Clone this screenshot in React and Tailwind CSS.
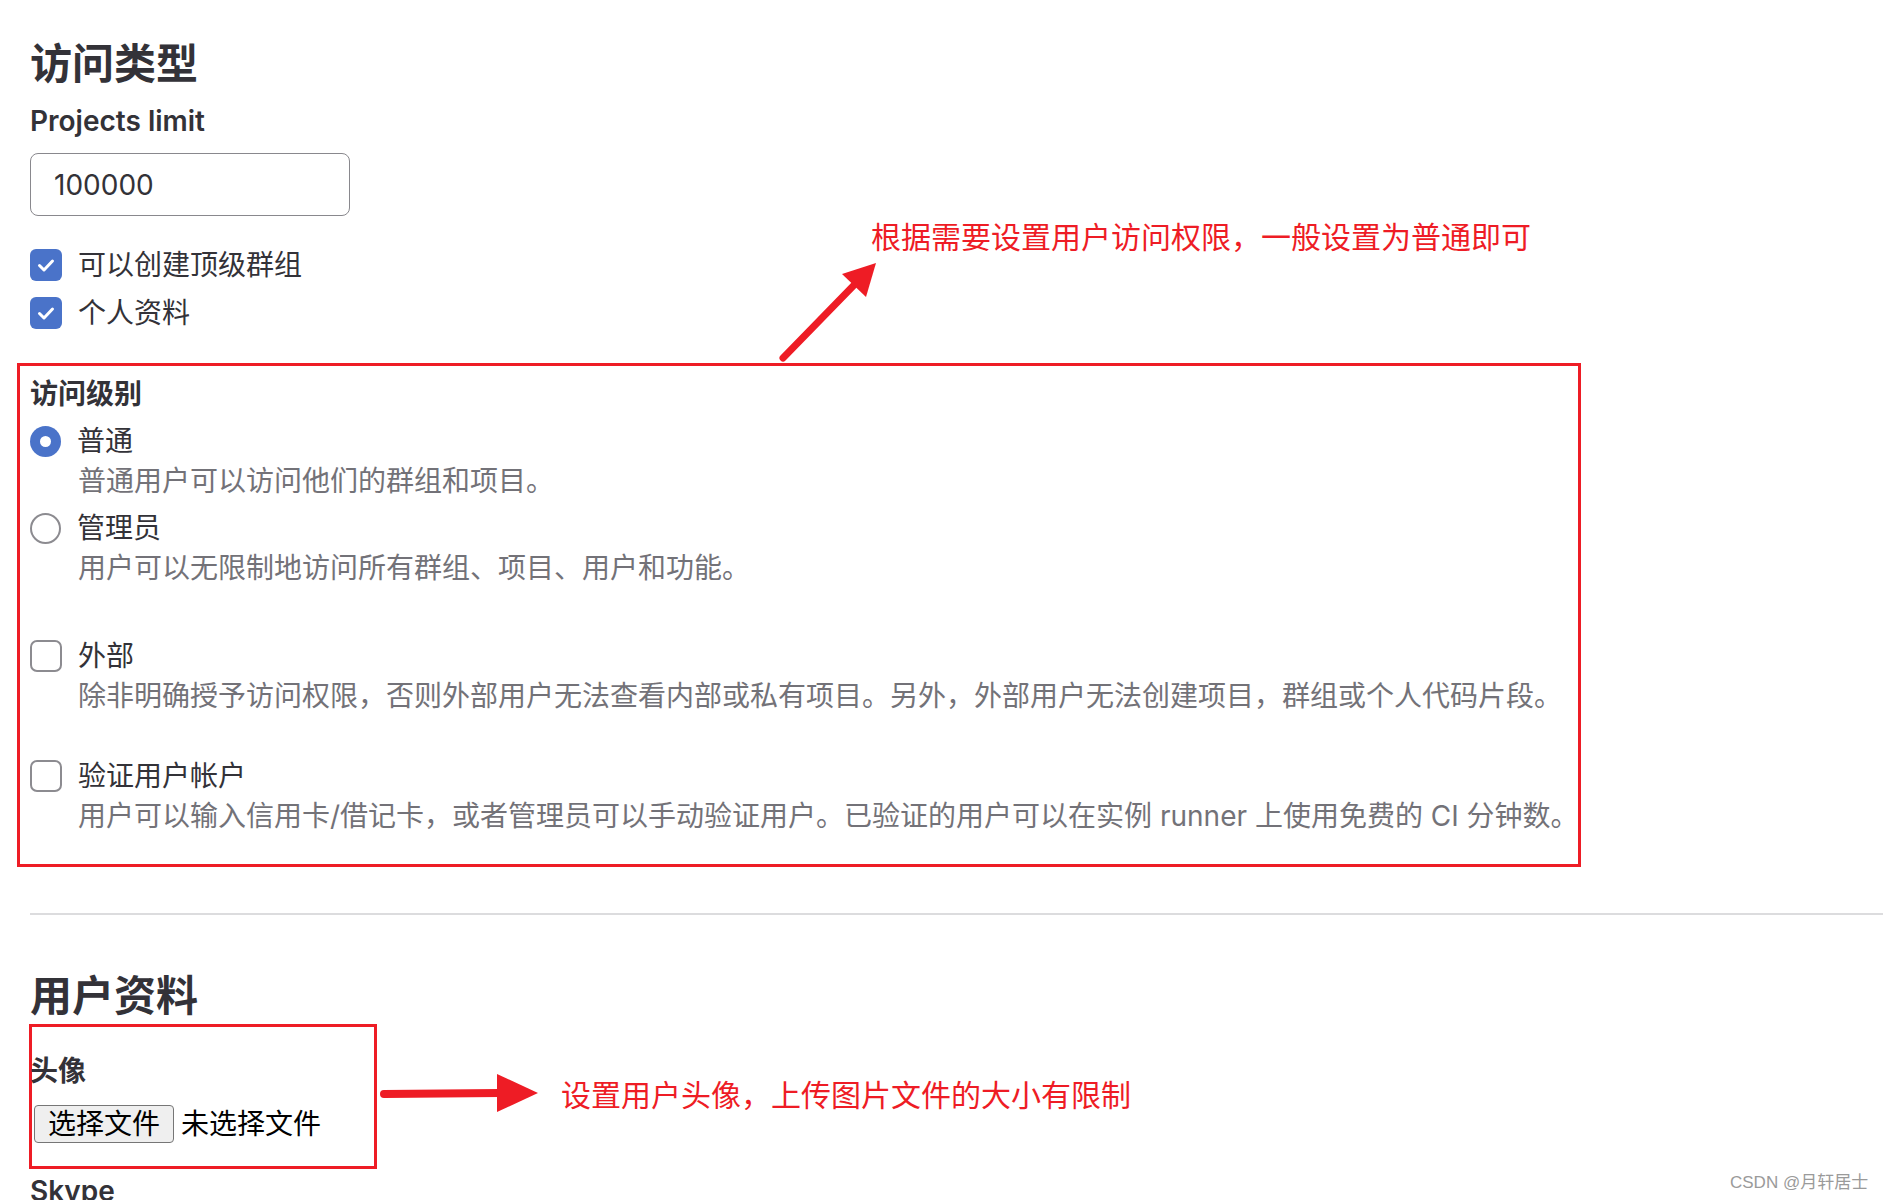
import React from 'react'

const font = { fontFamily: 'Inter, "Noto Sans CJK SC", sans-serif' }

function Checkbox({ checked }) {
  if (checked) {
    return (
      <span className="flex h-[32px] w-[32px] shrink-0 items-center justify-center rounded-[6px] bg-[#4a73c9]">
        <svg width="22" height="22" viewBox="0 0 22 22" fill="none">
          <path d="M4.5 11.5l4.5 4.5 8.5-9" stroke="white" strokeWidth="3" strokeLinecap="round" strokeLinejoin="round" />
        </svg>
      </span>
    )
  }
  return <span className="h-[32px] w-[32px] shrink-0 rounded-[7px] border-2 border-[#8c8b90] bg-white" />
}

function Radio({ checked }) {
  if (checked) {
    return (
      <span className="flex h-[31px] w-[31px] shrink-0 items-center justify-center rounded-full bg-[#4a73c9]">
        <span className="h-[11px] w-[11px] rounded-full bg-white" />
      </span>
    )
  }
  return <span className="h-[31px] w-[31px] shrink-0 rounded-full border-2 border-[#8c8b90] bg-white" />
}

function Option({ control, label, desc, className }) {
  return (
    <div className={className}>
      <div className="flex h-[40px] items-center gap-4">
        {control}
        <span className="text-[28px] leading-[40px] text-[#333238]">{label}</span>
      </div>
      <p className="whitespace-nowrap pl-[48px] text-[28px] leading-[40px] text-[#737278]">{desc}</p>
    </div>
  )
}

export default function App() {
  return (
    <div className="relative h-[1200px] w-full overflow-hidden bg-white" style={font}>
      <div className="pl-[30px]">
        {/* 访问类型 */}
        <h2 className="mt-[36px] text-[42px] font-bold leading-[56px] text-[#333238]">访问类型</h2>
        <label className="mt-[9px] block text-[28px] font-semibold leading-[40px] text-[#333238]">Projects limit</label>
        <input
          className="mt-[12px] block h-[63px] w-[320px] rounded-[8px] border border-[#89888d] px-[23px] text-[28px] text-[#333238] outline-none"
          value="100000"
          readOnly
        />
        <div className="mt-[25px]">
          <div className="flex h-[48px] items-center gap-4">
            <Checkbox checked />
            <span className="text-[28px] text-[#333238]">可以创建顶级群组</span>
          </div>
          <div className="flex h-[48px] items-center gap-4">
            <Checkbox checked />
            <span className="text-[28px] text-[#333238]">个人资料</span>
          </div>
        </div>

        {/* 访问级别 (annotated) */}
        <div className="ml-[-13px] mt-[26px] w-[1564px] border-[3px] border-[#ee1c25] pb-[28px] pl-[10px] pt-[8px]">
          <h3 className="text-[28px] font-bold leading-[40px] text-[#333238]">访问级别</h3>
          <Option
            className="mt-[7px]"
            control={<Radio checked />}
            label="普通"
            desc="普通用户可以访问他们的群组和项目。"
          />
          <Option
            className="mt-[7px]"
            control={<Radio />}
            label="管理员"
            desc="用户可以无限制地访问所有群组、项目、用户和功能。"
          />
          <Option
            className="mt-[48px]"
            control={<Checkbox />}
            label="外部"
            desc="除非明确授予访问权限，否则外部用户无法查看内部或私有项目。另外，外部用户无法创建项目，群组或个人代码片段。"
          />
          <Option
            className="mt-[40px]"
            control={<Checkbox />}
            label="验证用户帐户"
            desc="用户可以输入信用卡/借记卡，或者管理员可以手动验证用户。已验证的用户可以在实例 runner 上使用免费的 CI 分钟数。"
          />
        </div>

        <hr className="mt-[46px] border-0 border-t-2 border-[#dcdcde]" />

        {/* 用户资料 */}
        <h2 className="mt-[53px] text-[42px] font-bold leading-[56px] text-[#333238]">用户资料</h2>
        <div className="ml-[-1px] mt-0 h-[145px] w-[348px] border-[3px] border-[#ee1c25] pt-[24px]">
          <div className="ml-[-2px] text-[28px] font-bold leading-[40px] text-[#333238]">头像</div>
          <div className="mt-[14px] flex items-center gap-[7px] pl-[2px]">
            <button className="h-[38px] w-[140px] rounded-[4px] border border-[#767676] bg-[#efefef] text-[28px] leading-[36px] text-black">
              选择文件
            </button>
            <span className="text-[28px] leading-[38px] text-black">未选择文件</span>
          </div>
        </div>
        <div className="mt-[2px] text-[28px] font-semibold leading-[40px] text-[#333238]">Skype</div>
      </div>

      {/* annotations */}
      <svg className="absolute left-0 top-0" width="1883" height="1200" viewBox="0 0 1883 1200" fill="none">
        <path d="M783 358 L858 281" stroke="#ee1c25" strokeWidth="7" strokeLinecap="round" />
        <path d="M876 263 L866 297 L842 274 Z" fill="#ee1c25" />
        <path d="M384 1094 L500 1093" stroke="#ee1c25" strokeWidth="8" strokeLinecap="round" />
        <path d="M538 1093 L497 1074 L497 1112 Z" fill="#ee1c25" />
      </svg>
      <div className="absolute left-[871px] top-[217px] whitespace-nowrap text-[30px] leading-[40px] text-[#ee1c25]">
        根据需要设置用户访问权限，一般设置为普通即可
      </div>
      <div className="absolute left-[561px] top-[1075px] whitespace-nowrap text-[30px] leading-[40px] text-[#ee1c25]">
        设置用户头像，上传图片文件的大小有限制
      </div>
      <div
        className="absolute left-[1730px] top-[1171px] whitespace-nowrap text-[17px] leading-[24px] text-[#9a9a9a]"
        style={{ fontFamily: '"Liberation Sans", "Noto Sans CJK SC", sans-serif' }}
      >
        CSDN @月轩居士
      </div>
    </div>
  )
}
